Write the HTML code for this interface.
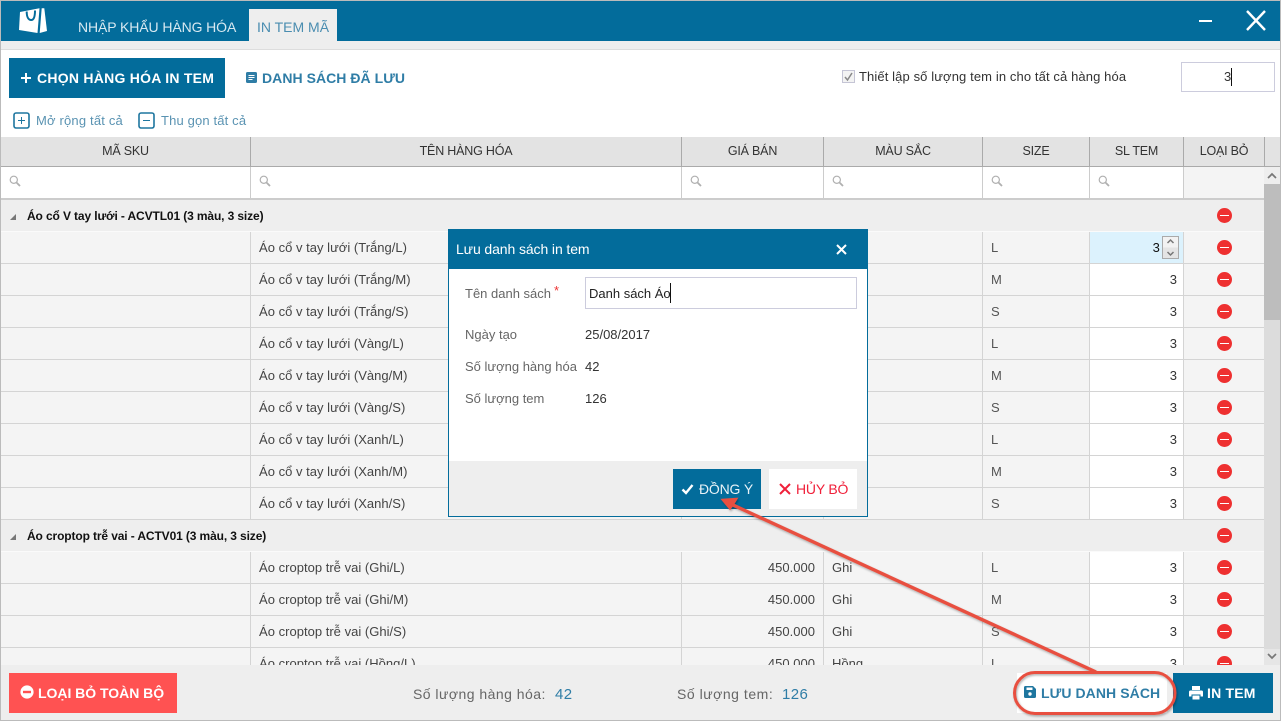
<!DOCTYPE html>
<html lang="vi"><head><meta charset="utf-8"><title>In tem mã</title>
<style>
*{box-sizing:border-box}
html,body{margin:0;padding:0;width:1281px;height:721px;overflow:hidden;background:#fff}
body{font:13px "Liberation Sans","DejaVu Sans",sans-serif;color:#444;position:relative;letter-spacing:.1px}
.a{position:absolute;white-space:nowrap}
.h{position:absolute;top:137px;height:30px;background:#e3e3e3;border-right:1px solid #aaa;border-bottom:1px solid #aaa;text-align:center;line-height:29px;color:#333;font-size:12.5px;letter-spacing:-.2px}
.f{position:absolute;top:167px;height:31px;background:#fff;border-right:1px solid #ccc}
.f svg{position:absolute;left:8px;top:8px}
#g{position:absolute;left:1px;top:200px;width:1263px;height:465px;overflow:hidden;background:#f4f4f4}
.gr{position:absolute;left:0;width:1263px;height:32px;background:#eee;border-bottom:1px solid #fafafa;font-weight:bold;color:#111;font-size:12px;line-height:33px;padding-left:26px;letter-spacing:-.12px}
.gr:before{content:"";position:absolute;left:9px;top:14px;border-style:solid;border-width:0 0 6px 6px;border-color:transparent transparent #777 transparent}
.r{position:absolute;left:0;width:1263px;height:32px;background:#f4f4f4;border-bottom:1px solid #d4d4d4;line-height:32px;letter-spacing:.02px}
.r span{position:absolute;top:0;height:31px;border-right:1px solid #d4d4d4;padding:0 8px;white-space:nowrap}
.c1{left:0;width:250px}.c2{left:250px;width:431px}.c3{left:681px;width:142px;text-align:right}.c4{left:823px;width:159px}.c5{left:982px;width:107px;color:#555}.c6{left:1089px;width:94px;background:#fff;text-align:right;color:#333;padding-right:6px!important}.c7{left:1183px;width:80px;border-right:0!important}
.m{position:absolute;width:15px;height:15px;border-radius:50%;background:#ee3030;left:1216px}
.m:after{content:"";position:absolute;left:3px;top:6.5px;width:9px;height:1.5px;background:#fff}
#dlg{position:absolute;left:448px;top:229px;width:420px;height:288px;background:#fff;border:1px solid #036c9b;letter-spacing:0}
.lb{color:#666;position:absolute;left:16px;white-space:nowrap}
.vl{color:#333;position:absolute;left:136px;white-space:nowrap}
.btn{position:absolute;font-weight:bold;white-space:nowrap}
</style></head><body>

<div class="a" style="left:0;top:0;width:1281px;height:721px;border:1px solid #bbb;z-index:20;pointer-events:none"></div>

<!-- title bar -->
<div class="a" style="left:1px;top:1px;width:1279px;height:40px;background:#036c9b"></div>
<svg class="a" style="left:17px;top:6px" width="32" height="30" viewBox="0 0 32 30"><path d="M3 6 22.5 2.3 20.5 27 2 24Z" fill="#fff"/><path d="M24.7 2.3H27.3L30 25 22.7 27Z" fill="#fff"/><path d="M9.7 5.5c0 6 2 8.5 4.5 8.500s3.800-3 3.800-9.500" fill="none" stroke="#036c9b" stroke-width="2"/></svg>
<div class="a" style="left:78px;top:18px;font-size:14px;color:#d8e9f1;letter-spacing:-.1px;line-height:18px">NHẬP KHẨU HÀNG HÓA</div>
<div class="a" style="left:249px;top:9px;width:88px;height:32px;background:#eee;color:#4a8db0;font-size:14px;text-align:center;line-height:36px;letter-spacing:0">IN TEM MÃ</div>
<svg class="a" style="left:1190px;top:5px" width="85" height="30"><path d="M9 16H22" stroke="#fff" stroke-width="2"/><path d="M57 6 75 25M75 6 57 25" stroke="#fff" stroke-width="2.4"/></svg>
<div class="a" style="left:1px;top:41px;width:1279px;height:8px;background:#eee"></div>
<div class="a" style="left:1px;top:49px;width:1279px;height:1px;background:#ddd"></div>

<!-- toolbar -->
<div class="btn" style="left:9px;top:58px;width:216px;height:40px;background:#036c9b;color:#fff;font-size:14px;line-height:41px;padding-left:28px;letter-spacing:.25px">CHỌN HÀNG HÓA IN TEM</div>
<svg class="a" style="left:21px;top:73px" width="10" height="10"><path d="M5 0V10M0 5H10" stroke="#fff" stroke-width="2"/></svg>
<svg class="a" style="left:246px;top:72px" width="11" height="11"><rect width="11" height="11" rx="1.5" fill="#2f7da6"/><path d="M2.500 3.500H8.500M2.500 5.500H8.500M2.500 7.500H6.500" stroke="#fff"/></svg>
<div class="a" style="left:262px;top:69px;font-weight:bold;font-size:14px;color:#2f7da6;line-height:18px;letter-spacing:.05px">DANH SÁCH ĐÃ LƯU</div>
<svg class="a" style="left:13px;top:112px" width="17" height="17"><rect x="1" y="1" width="15" height="15" rx="2" fill="none" stroke="#1e769f" stroke-width="1.6"/><path d="M8.500 5V12M5 8.500H12" stroke="#1e769f"/></svg>
<div class="a" style="left:36px;top:112px;color:#5a93b2;line-height:17px;letter-spacing:.18px">Mở rộng tất cả</div>
<svg class="a" style="left:138px;top:112px" width="17" height="17"><rect x="1" y="1" width="15" height="15" rx="2" fill="none" stroke="#1e769f" stroke-width="1.6"/><path d="M5 8.500H12" stroke="#1e769f"/></svg>
<div class="a" style="left:161px;top:112px;color:#5a93b2;line-height:17px;letter-spacing:.15px">Thu gọn tất cả</div>

<svg class="a" style="left:842px;top:70px" width="13" height="13"><rect x=".5" y=".5" width="12" height="12" fill="#f3f3f3" stroke="#c5c5d5"/><path d="M3 7 5.500 10 10 3" fill="none" stroke="#888" stroke-width="1.5"/></svg>
<div class="a" style="left:859px;top:69px;color:#333;line-height:16px;letter-spacing:.11px">Thiết lập số lượng tem in cho tất cả hàng hóa</div>
<div class="a" style="left:1181px;top:62px;width:94px;height:30px;border:1px solid #ccccdd;background:#fff;line-height:28px;color:#333;padding-left:42px">3</div>
<div class="a" style="left:1231px;top:68px;width:1px;height:18px;background:#111"></div>

<!-- header -->
<div class="h" style="left:1px;width:250px">MÃ SKU</div>
<div class="h" style="left:251px;width:431px">TÊN HÀNG HÓA</div>
<div class="h" style="left:682px;width:142px">GIÁ BÁN</div>
<div class="h" style="left:824px;width:159px">MÀU SẮC</div>
<div class="h" style="left:983px;width:107px">SIZE</div>
<div class="h" style="left:1090px;width:94px">SL TEM</div>
<div class="h" style="left:1184px;width:81px">LOẠI BỎ</div>
<div class="h" style="left:1265px;width:15px;border-right:0"></div>

<!-- filter -->
<svg width="0" height="0" style="position:absolute"><symbol id="q" viewBox="0 0 12 12"><circle cx="4.800" cy="4.800" r="3.600" fill="none" stroke="#b0b0b0" stroke-width="1.200"/><path d="M7.600 7.600 11 11" stroke="#b0b0b0" stroke-width="1.800"/></symbol></svg>
<div class="f" style="left:1px;width:250px"><svg width="12" height="12"><use href="#q"/></svg></div>
<div class="f" style="left:251px;width:431px"><svg width="12" height="12"><use href="#q"/></svg></div>
<div class="f" style="left:682px;width:142px"><svg width="12" height="12"><use href="#q"/></svg></div>
<div class="f" style="left:824px;width:159px"><svg width="12" height="12"><use href="#q"/></svg></div>
<div class="f" style="left:983px;width:107px"><svg width="12" height="12"><use href="#q"/></svg></div>
<div class="f" style="left:1090px;width:94px"><svg width="12" height="12"><use href="#q"/></svg></div>
<div class="f" style="left:1184px;width:80px;background:#f4f4f4;border-right:0"></div>
<div class="a" style="left:1px;top:198px;width:1263px;height:2px;background:#ccc"></div>

<!-- grid -->
<div id="g">
<div class="gr" style="top:0">Áo cổ V tay lưới - ACVTL01 (3 màu, 3 size)</div><i class="m" style="top:8px"></i>
<div class="r" style="top:32px"><span class="c1"></span><span class="c2">Áo cổ v tay lưới (Trắng/L)</span><span class="c3">450.000</span><span class="c4">Trắng</span><span class="c5">L</span><span class="c6" style="background:#dcf2fd"></span><span class="c7"></span></div><i class="m" style="top:40px"></i>
<div class="r" style="top:64px"><span class="c1"></span><span class="c2">Áo cổ v tay lưới (Trắng/M)</span><span class="c3">450.000</span><span class="c4">Trắng</span><span class="c5">M</span><span class="c6">3</span><span class="c7"></span></div><i class="m" style="top:72px"></i>
<div class="r" style="top:96px"><span class="c1"></span><span class="c2">Áo cổ v tay lưới (Trắng/S)</span><span class="c3">450.000</span><span class="c4">Trắng</span><span class="c5">S</span><span class="c6">3</span><span class="c7"></span></div><i class="m" style="top:104px"></i>
<div class="r" style="top:128px"><span class="c1"></span><span class="c2">Áo cổ v tay lưới (Vàng/L)</span><span class="c3">450.000</span><span class="c4">Vàng</span><span class="c5">L</span><span class="c6">3</span><span class="c7"></span></div><i class="m" style="top:136px"></i>
<div class="r" style="top:160px"><span class="c1"></span><span class="c2">Áo cổ v tay lưới (Vàng/M)</span><span class="c3">450.000</span><span class="c4">Vàng</span><span class="c5">M</span><span class="c6">3</span><span class="c7"></span></div><i class="m" style="top:168px"></i>
<div class="r" style="top:192px"><span class="c1"></span><span class="c2">Áo cổ v tay lưới (Vàng/S)</span><span class="c3">450.000</span><span class="c4">Vàng</span><span class="c5">S</span><span class="c6">3</span><span class="c7"></span></div><i class="m" style="top:200px"></i>
<div class="r" style="top:224px"><span class="c1"></span><span class="c2">Áo cổ v tay lưới (Xanh/L)</span><span class="c3">450.000</span><span class="c4">Xanh</span><span class="c5">L</span><span class="c6">3</span><span class="c7"></span></div><i class="m" style="top:232px"></i>
<div class="r" style="top:256px"><span class="c1"></span><span class="c2">Áo cổ v tay lưới (Xanh/M)</span><span class="c3">450.000</span><span class="c4">Xanh</span><span class="c5">M</span><span class="c6">3</span><span class="c7"></span></div><i class="m" style="top:264px"></i>
<div class="r" style="top:288px"><span class="c1"></span><span class="c2">Áo cổ v tay lưới (Xanh/S)</span><span class="c3">450.000</span><span class="c4">Xanh</span><span class="c5">S</span><span class="c6">3</span><span class="c7"></span></div><i class="m" style="top:296px"></i>
<div class="gr" style="top:320px">Áo croptop trễ vai - ACTV01 (3 màu, 3 size)</div><i class="m" style="top:328px"></i>
<div class="r" style="top:352px"><span class="c1"></span><span class="c2">Áo croptop trễ vai (Ghi/L)</span><span class="c3">450.000</span><span class="c4">Ghi</span><span class="c5">L</span><span class="c6">3</span><span class="c7"></span></div><i class="m" style="top:360px"></i>
<div class="r" style="top:384px"><span class="c1"></span><span class="c2">Áo croptop trễ vai (Ghi/M)</span><span class="c3">450.000</span><span class="c4">Ghi</span><span class="c5">M</span><span class="c6">3</span><span class="c7"></span></div><i class="m" style="top:392px"></i>
<div class="r" style="top:416px"><span class="c1"></span><span class="c2">Áo croptop trễ vai (Ghi/S)</span><span class="c3">450.000</span><span class="c4">Ghi</span><span class="c5">S</span><span class="c6">3</span><span class="c7"></span></div><i class="m" style="top:424px"></i>
<div class="r" style="top:448px"><span class="c1"></span><span class="c2">Áo croptop trễ vai (Hồng/L)</span><span class="c3">450.000</span><span class="c4">Hồng</span><span class="c5">L</span><span class="c6">3</span><span class="c7"></span></div><i class="m" style="top:456px"></i>
</div>

<!-- spinner in first row -->
<div class="a" style="left:1140px;top:233px;width:20px;height:30px;text-align:right;line-height:30px;color:#111">3</div>
<div class="a" style="left:1162px;top:236px;width:17px;height:23px;border:1px solid #aaa;background:linear-gradient(#f2f2f2 50%,#e4e4e4 50%)"></div>
<svg class="a" style="left:1165px;top:238px" width="11" height="19"><path d="M2.500 5 5.500 2 8.500 5M2.500 14 5.500 17 8.500 14" fill="none" stroke="#777" stroke-width="1.500"/></svg>

<!-- scrollbar -->
<div class="a" style="left:1264px;top:167px;width:16px;height:498px;background:#dcdcdc"></div>
<div class="a" style="left:1264px;top:167px;width:16px;height:17px;background:#eee"></div>
<div class="a" style="left:1264px;top:184px;width:16px;height:136px;background:#bdbdbd"></div>
<div class="a" style="left:1264px;top:649px;width:16px;height:16px;background:#e6e6e6"></div>
<svg class="a" style="left:1264px;top:167px" width="16" height="498"><path d="M4 11 8 7 12 11M4 487 8 491 12 487" fill="none" stroke="#777" stroke-width="1.700"/></svg>

<!-- footer -->
<div class="a" style="left:1px;top:665px;width:1279px;height:55px;background:#eee"></div>
<div class="btn" style="left:9px;top:673px;width:168px;height:40px;background:#ff5252;color:#fff;font-size:14px;line-height:41px;padding-left:29px;letter-spacing:-.03px">LOẠI BỎ TOÀN BỘ</div>
<svg class="a" style="left:20px;top:685px" width="14" height="14"><circle cx="7" cy="7" r="6.600" fill="#fff"/><rect x="3" y="5.800" width="8" height="2.400" fill="#ff5252"/></svg>
<div class="a" style="left:413px;top:685px;font-size:14px;color:#666;line-height:18px;letter-spacing:.47px">Số lượng hàng hóa:</div>
<div class="a" style="left:555px;top:686px;font-size:15px;color:#2f7da6;line-height:18px;letter-spacing:.4px">42</div>
<div class="a" style="left:677px;top:685px;font-size:14px;color:#666;line-height:18px;letter-spacing:.53px">Số lượng tem:</div>
<div class="a" style="left:782px;top:686px;font-size:15px;color:#2f7da6;line-height:18px;letter-spacing:.4px">126</div>
<div class="a" style="left:1017px;top:673px;width:150px;height:40px;background:#fff"></div>
<div class="a" style="left:1041px;top:684px;font-weight:bold;font-size:14px;color:#2f7da6;line-height:18px;letter-spacing:.08px">LƯU DANH SÁCH</div>
<svg class="a" style="left:1024px;top:686px" width="12" height="12"><path d="M0 1.500Q0 0 1.500 0H9L12 3V10.500Q12 12 10.500 12H1.500Q0 12 0 10.500Z" fill="#1e769f"/><rect x="2.500" y="1.500" width="6" height="2.500" fill="#fff"/><circle cx="6" cy="8" r="1.700" fill="#fff"/></svg>
<div class="a" style="left:1173px;top:673px;width:100px;height:40px;background:#036c9b"></div>
<div class="a" style="left:1207px;top:684px;font-weight:bold;font-size:14px;color:#fff;line-height:18px;letter-spacing:.2px">IN TEM</div>
<svg class="a" style="left:1189px;top:686px" width="14" height="14"><path d="M3 0H11V4H3ZM1.500 4.500H12.500Q14 4.500 14 6V10.500H11.500V8.500H2.500V10.500H0V6Q0 4.500 1.500 4.500Z" fill="#fff"/><rect x="3.500" y="9.500" width="7" height="4" fill="#fff"/></svg>

<!-- dialog -->
<div id="dlg">
 <div class="a" style="left:0;top:0;width:418px;height:39px;background:#036c9b;color:#fff;font-size:14px;line-height:39px;padding-left:7px;letter-spacing:-.1px">Lưu danh sách in tem</div>
 <svg class="a" style="left:387px;top:14px" width="11" height="11"><path d="M1 1 10 10M10 1 1 10" stroke="#fff" stroke-width="2"/></svg>
 <div class="lb" style="top:56px;line-height:16px">Tên danh sách</div>
 <div class="a" style="left:105px;top:53px;color:#e33;line-height:16px">*</div>
 <div class="a" style="left:136px;top:47px;width:272px;height:32px;border:1px solid #ccccdd;line-height:31px;padding-left:3px;color:#222">Danh sách Áo</div>
 <div class="a" style="left:221px;top:53px;width:1px;height:20px;background:#111"></div>
 <div class="lb" style="top:97px;line-height:16px">Ngày tạo</div><div class="vl" style="top:97px;line-height:16px">25/08/2017</div>
 <div class="lb" style="top:129px;line-height:16px">Số lượng hàng hóa</div><div class="vl" style="top:129px;line-height:16px">42</div>
 <div class="lb" style="top:161px;line-height:16px">Số lượng tem</div><div class="vl" style="top:161px;line-height:16px">126</div>
 <div class="a" style="left:0;top:231px;width:418px;height:55px;background:#eee"></div>
 <div class="a" style="left:224px;top:239px;width:88px;height:40px;background:#036c9b;color:#e8f2f7;font-size:14px;line-height:41px;padding-left:26px;letter-spacing:-.2px">ĐỒNG Ý</div>
 <svg class="a" style="left:232px;top:253px" width="13" height="12"><path d="M1.500 6.500 5 10 11.500 2" fill="none" stroke="#fff" stroke-width="2.400"/></svg>
 <div class="a" style="left:320px;top:239px;width:88px;height:40px;background:#fff;color:#f0203a;font-size:14px;line-height:41px;padding-left:27px;letter-spacing:-.2px">HỦY BỎ</div>
 <svg class="a" style="left:330px;top:253px" width="12" height="12"><path d="M1 1 11 11M11 1 1 11" stroke="#f0203a" stroke-width="2"/></svg>
</div>

<!-- annotation -->
<svg class="a" style="left:0;top:0;z-index:10" width="1281" height="721">
 <defs><filter id="s" x="-5%" y="-5%" width="110%" height="110%"><feDropShadow dx="1" dy="1.500" stdDeviation="1" flood-color="#000" flood-opacity=".3"/></filter></defs>
 <g filter="url(#s)" fill="none" stroke="#e8503f">
  <path d="M1096 672 733 505" stroke-width="3.400"/>
  <path d="M722 499.500 737 498.500 733 505 730 509Z" fill="#e8503f" stroke-width="1.500"/>
  <rect x="1014.500" y="672.500" width="160.500" height="41" rx="20.500" stroke-width="3"/>
 </g>
</svg>
</body></html>
